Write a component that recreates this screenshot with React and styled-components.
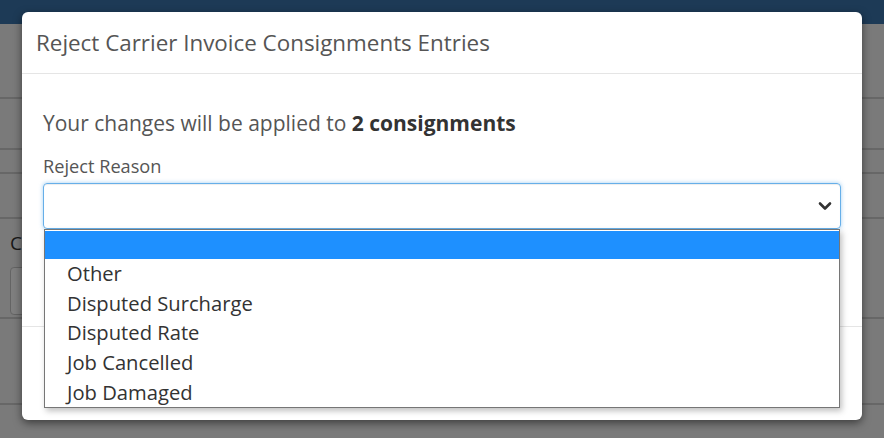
import React from 'react'
import styled, { createGlobalStyle } from 'styled-components'

const GlobalStyle = createGlobalStyle`
    html, body {
        margin: 0;
        padding: 0;
        width: 884px;
        height: 438px;
        overflow: hidden;
        font-family: "Open Sans", "Liberation Sans", sans-serif;
    }
`

const Page = styled.div`
    position: relative;
    width: 884px;
    height: 438px;
    background: #f4f4f4;
    overflow: hidden;
`
const TopBar = styled.div`
    height: 24px;
    background: #3a75ad;
`
const PageRow = styled.div`
    height: ${({h}) => h}px;
    border-bottom: 2px solid #cfcfcf;
    box-sizing: border-box;
`
const FieldBlock = styled.div`
    padding: 14px 10px 0;
    height: 100px;
    box-sizing: border-box;
    border-bottom: 2px solid #cfcfcf;
`
const FieldLabel = styled.div`
    font-size: 19px;
    color: #333;
    line-height: 20px;
`
const FieldInput = styled.div`
    margin-top: 14px;
    height: 46px;
    width: 200px;
    border: 1px solid #c8c8c8;
    border-radius: 4px;
    background: #fff;
`
const Backdrop = styled.div`
    position: absolute;
    inset: 0;
    background: rgba(0, 0, 0, 0.5);
`
const Modal = styled.div`
    position: absolute;
    left: 22px;
    top: 12px;
    width: 840px;
    height: 408px;
    background: #fff;
    border-radius: 6px;
    box-shadow: 0 3px 9px rgba(0, 0, 0, 0.5);
    display: flex;
    flex-direction: column;
`
const ModalHeader = styled.div`
    height: 62px;
    box-sizing: border-box;
    padding: 0 14px;
    display: flex;
    align-items: center;
    border-bottom: 1px solid #e5e5e5;
`
const Title = styled.h4`
    margin: 0;
    font-size: 22.4px;
    line-height: 28px;
    font-weight: 400;
    color: #555;
`
const ModalBody = styled.div`
    position: relative;
    height: 253px;
    box-sizing: border-box;
    padding: 35px 21px 0;
    border-bottom: 1px solid #e5e5e5;
`
const Intro = styled.p`
    margin: 0;
    font-size: 21px;
    line-height: 28px;
    color: #555;
    b { color: #333; font-weight: 700; }
`
const Label = styled.label`
    display: block;
    margin-top: 17px;
    font-size: 18.2px;
    line-height: 24px;
    color: #555;
`
const SelectBox = styled.div`
    margin-top: 5px;
    height: 46px;
    box-sizing: border-box;
    border: 1px solid #66afe9;
    border-radius: 4px;
    box-shadow: inset 0 1px 1px rgba(0,0,0,.075), 0 0 4px rgba(102, 175, 233, 0.6);
    display: flex;
    align-items: center;
    justify-content: flex-end;
    padding: 0 8px 0 12px;
`
const Options = styled.ul`
    position: absolute;
    left: 22px;
    top: 155px;
    width: 796px;
    margin: 0;
    padding: 1px 0 0;
    list-style: none;
    box-sizing: border-box;
    background: #fff;
    border: 1px solid #767676;
    box-shadow: 2px 3px 6px rgba(0, 0, 0, 0.25);
    z-index: 2;
`
const Option = styled.li`
    height: ${({blank}) => blank ? 28 : 29.7}px;
    line-height: 29.7px;
    padding-left: 22px;
    font-size: 20.2px;
    color: #333;
    background: ${({active}) => active ? '#1e90ff' : '#fff'};
`
const ModalFooter = styled.div`
    flex: 1;
`

const Chevron = () => (
    <svg width="14" height="10" viewBox="0 0 14 10">
        <path d="M2 2.5 L7 7.5 L12 2.5" fill="none" stroke="#333" strokeWidth="2.6" strokeLinecap="round" strokeLinejoin="round" />
    </svg>
)

const reasons = ['Other', 'Disputed Surcharge', 'Disputed Rate', 'Job Cancelled', 'Job Damaged']

const App = () => {
    return (
        <>
        <GlobalStyle />
        <Page>
            <TopBar />
            <PageRow h={75} />
            <PageRow h={51} />
            <PageRow h={24} />
            <PageRow h={45} />
            <FieldBlock>
                <FieldLabel>Carrier</FieldLabel>
                <FieldInput />
            </FieldBlock>
            <PageRow h={86} />
            <Backdrop />
            <Modal>
                <ModalHeader>
                    <Title>Reject Carrier Invoice Consignments Entries</Title>
                </ModalHeader>
                <ModalBody>
                    <Intro>Your changes will be applied to <b>2 consignments</b></Intro>
                    <Label>Reject Reason</Label>
                    <SelectBox>
                        <Chevron />
                    </SelectBox>
                    <Options>
                        <Option blank active>&nbsp;</Option>
                        {reasons.map((item) => (
                            <Option key={item}>{item}</Option>
                        ))}
                    </Options>
                </ModalBody>
                <ModalFooter />
            </Modal>
        </Page>
        </>
    )
}

export default App
